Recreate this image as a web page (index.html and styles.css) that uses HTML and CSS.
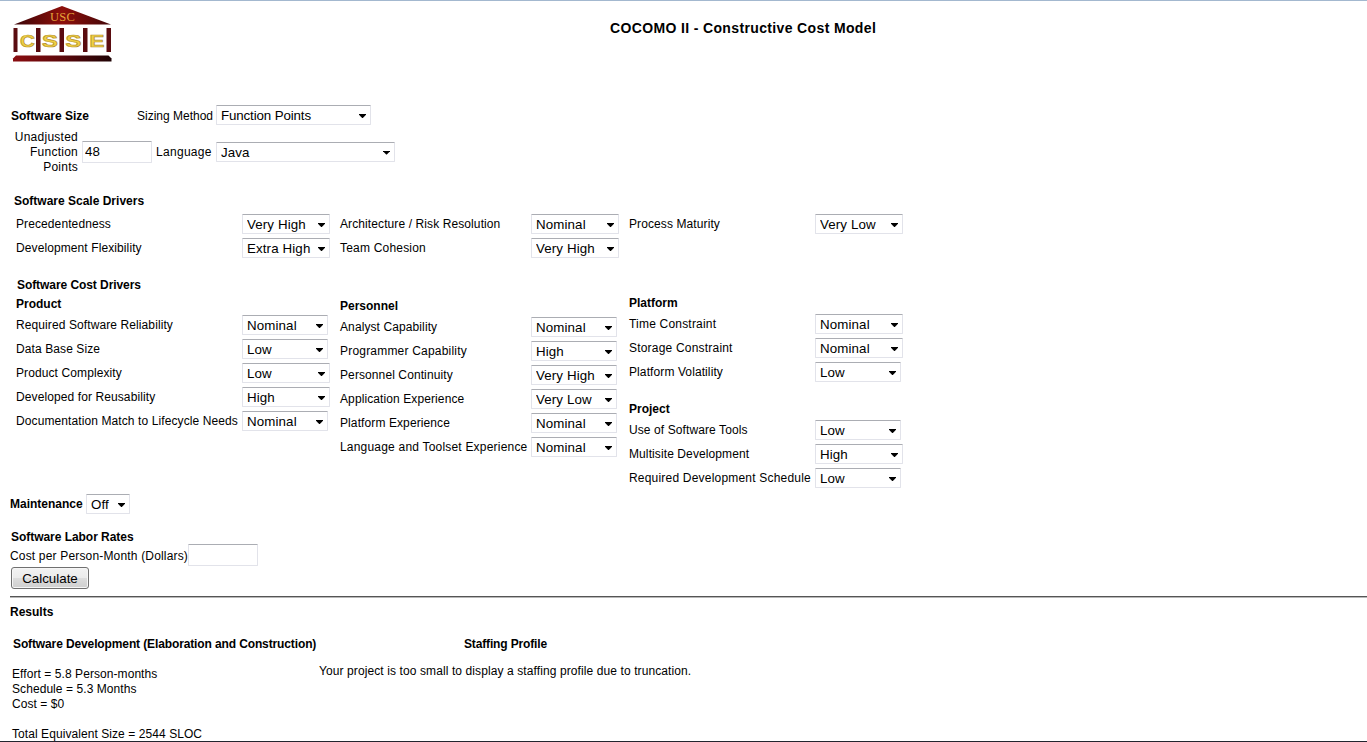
FILE: index.html
```html
<!DOCTYPE html>
<html lang="en">
<head>
<meta charset="utf-8">
<title>COCOMO II - Constructive Cost Model</title>
<link rel="stylesheet" href="styles.css">
</head>
<body>
<div class="page">
  <header class="header">
    <svg class="logo" width="102" height="60" viewBox="0 0 102 60" role="img" aria-label="USC CSSE">
      <defs>
        <linearGradient id="roof" x1="0" x2="1"><stop offset="0" stop-color="#3a0507"/><stop offset=".5" stop-color="#8d0f0b"/><stop offset="1" stop-color="#420608"/></linearGradient>
        <linearGradient id="base" x1="0" x2="1"><stop offset="0" stop-color="#8a0d10"/><stop offset=".5" stop-color="#5c080b"/><stop offset="1" stop-color="#1e0305"/></linearGradient>
      </defs>
      <path d="M50 1 L99 19.500 H2 Z" fill="url(#roof)"/>
      <text x="50.500" y="16" class="logo-usc" text-anchor="middle" textLength="25">USC</text>
      <g fill="#5a0c10"><path d="M1.500 23h4v24h-4zM24 23h4.500v24H24zM47.500 23H52v24h-4.500zM71 23h4.500v24H71zM94.500 23H99v24h-4.500z"/></g>
      <g class="logo-letters" text-anchor="middle">
        <text x="15.500" y="41.500" textLength="15" lengthAdjust="spacingAndGlyphs">C</text>
        <text x="38" y="41.500" textLength="16" lengthAdjust="spacingAndGlyphs">S</text>
        <text x="61.500" y="41.500" textLength="16" lengthAdjust="spacingAndGlyphs">S</text>
        <text x="85" y="41.500" textLength="15" lengthAdjust="spacingAndGlyphs">E</text>
      </g>
      <path d="M4 50.500H96.500L99.500 53.500V56.500H1V53.500Z" fill="url(#base)"/>
    </svg>
    <h1 class="title">COCOMO II - Constructive Cost Model</h1>
  </header>

  <section class="size">
    <div class="size-row">
      <b class="size-heading">Software Size</b>
      <span class="method-label">Sizing Method</span>
      <span class="select method"><select><option>Function Points</option></select></span>
    </div>
    <div class="size-row points-row">
      <span class="points-label">Unadjusted Function Points</span>
      <input class="field" type="text" value="48">
      <span class="language-label">Language</span>
      <span class="select language"><select><option>Java</option></select></span>
    </div>
  </section>

  <section class="scale">
    <h2 class="heading scale-heading">Software Scale Drivers</h2>
    <div class="columns">
      <div class="column first">
        <div class="row"><span>Precedentedness</span><span class="select"><select><option>Very High</option></select></span></div>
        <div class="row"><span>Development Flexibility</span><span class="select"><select><option>Extra High</option></select></span></div>
      </div>
      <div class="column second">
        <div class="row"><span>Architecture / Risk Resolution</span><span class="select"><select><option>Nominal</option></select></span></div>
        <div class="row"><span class="wide">Team Cohesion</span><span class="select"><select><option>Very High</option></select></span></div>
      </div>
      <div class="column third">
        <div class="row"><span>Process Maturity</span><span class="select"><select><option>Very Low</option></select></span></div>
      </div>
    </div>
  </section>

  <section class="cost">
    <h2 class="heading cost-heading">Software Cost Drivers</h2>
    <div class="columns">
      <div class="column first product">
        <h3 class="heading">Product</h3>
        <div class="row"><span>Required Software Reliability</span><span class="select narrow"><select><option>Nominal</option></select></span></div>
        <div class="row"><span>Data Base Size</span><span class="select narrow"><select><option>Low</option></select></span></div>
        <div class="row"><span>Product Complexity</span><span class="select"><select><option>Low</option></select></span></div>
        <div class="row"><span>Developed for Reusability</span><span class="select"><select><option>High</option></select></span></div>
        <div class="row"><span>Documentation Match to Lifecycle Needs</span><span class="select narrow"><select><option>Nominal</option></select></span></div>
      </div>
      <div class="column second personnel">
        <h3 class="heading">Personnel</h3>
        <div class="row"><span>Analyst Capability</span><span class="select narrow"><select><option>Nominal</option></select></span></div>
        <div class="row"><span class="wide">Programmer Capability</span><span class="select narrow"><select><option>High</option></select></span></div>
        <div class="row"><span>Personnel Continuity</span><span class="select narrow"><select><option>Very High</option></select></span></div>
        <div class="row"><span>Application Experience</span><span class="select narrow"><select><option>Very Low</option></select></span></div>
        <div class="row"><span>Platform Experience</span><span class="select narrow"><select><option>Nominal</option></select></span></div>
        <div class="row"><span class="wide">Language and Toolset Experience</span><span class="select narrow"><select><option>Nominal</option></select></span></div>
      </div>
      <div class="column third platform">
        <h3 class="heading">Platform</h3>
        <div class="row"><span class="wide">Time Constraint</span><span class="select"><select><option>Nominal</option></select></span></div>
        <div class="row"><span class="wide">Storage Constraint</span><span class="select"><select><option>Nominal</option></select></span></div>
        <div class="row"><span>Platform Volatility</span><span class="select narrow"><select><option>Low</option></select></span></div>
        <h3 class="heading project">Project</h3>
        <div class="row"><span>Use of Software Tools</span><span class="select narrow"><select><option>Low</option></select></span></div>
        <div class="row"><span>Multisite Development</span><span class="select"><select><option>High</option></select></span></div>
        <div class="row"><span class="wide">Required Development Schedule</span><span class="select narrow"><select><option>Low</option></select></span></div>
      </div>
    </div>
  </section>

  <section class="maintenance">
    <b>Maintenance</b>
    <span class="select toggle"><select><option>Off</option></select></span>
  </section>

  <section class="labor">
    <h2 class="heading labor-heading">Software Labor Rates</h2>
    <div class="labor-row"><span>Cost per Person-Month (Dollars)</span><input class="field" type="text"></div>
    <button class="calculate" type="button">Calculate</button>
  </section>

  <section class="results">
    <h2 class="heading">Results</h2>
    <div class="result-columns">
      <div class="development">
        <h3 class="heading">Software Development (Elaboration and Construction)</h3>
        <p class="effort">Effort = 5.8 Person-months<br>Schedule = 5.3 Months<br>Cost = $0<br><br>Total Equivalent Size = 2544 SLOC</p>
      </div>
      <div class="staffing">
        <h3 class="heading">Staffing Profile</h3>
        <p>Your project is too small to display a staffing profile due to truncation.</p>
      </div>
    </div>
  </section>
</div>
</body>
</html>
```
FILE: styles.css
```css
* { box-sizing: border-box; }
body { margin: 0; background: #fff; }
.page {
  height: 742px;
  overflow: hidden;
  border-top: 1px solid #a3b8cf;
  border-bottom: 1px solid #22242e;
  font: 12px/15px "Liberation Sans", Arial, sans-serif;
  letter-spacing: 0.1px;
  color: #000;
}
h1, h2, h3, p { margin: 0; }
.heading { font-size: 12px; line-height: 15px; font-weight: bold; letter-spacing: 0; }

.header { display: flex; height: 104px; padding: 4px 0 0 12px; }
.logo { flex: none; }
.logo-usc { font: 12.5px "Liberation Serif", serif; fill: #e5a33a; }
.logo-letters { font: bold 17px "Liberation Sans", sans-serif; fill: #eed044; stroke: #b8922a; stroke-width: .7px; }
.title {
  padding: 14px 0 0 496px;
  font-size: 14px;
  line-height: 18px;
  letter-spacing: 0.36px;
  white-space: nowrap;
}

.select { position: relative; display: block; flex: none; width: 88px; height: 20px; }
.select select {
  appearance: none;
  display: block;
  width: 100%;
  height: 20px;
  margin: 0;
  padding: 1px 0 0 4px;
  border: 1px solid #e2e3ea;
  border-top-color: #abadb3;
  border-radius: 1px;
  background: #fff;
  color: #000;
  font: 13.333px/17px "Liberation Sans", Arial, sans-serif;
  letter-spacing: 0.12px;
}
.select::after {
  content: "";
  position: absolute;
  right: 5px;
  top: 9px;
  width: 7px;
  height: 4px;
  background: #000;
  clip-path: polygon(0 0, 100% 0, 100% 20%, 55% 100%, 45% 100%, 0 20%);
}
.narrow { width: 86px; }
.field {
  width: 70px;
  height: 22px;
  margin: 0;
  padding: 1px 2px;
  border: 1px solid #e2e3ea;
  border-top-color: #abadb3;
  border-radius: 1px;
  font: 13.333px "Liberation Sans", Arial, sans-serif;
}

.size-row { display: flex; align-items: center; height: 20px; padding-left: 11px; }
.size-heading, .method-label, .points-label, .language-label { padding-top: 2px; }
.size-heading { width: 126px; letter-spacing: 0; }
.method-label { width: 79px; letter-spacing: 0; }
.method { width: 155px; }
.method select { letter-spacing: -0.13px; }
.points-row { height: 45px; margin-top: 4px; }
.points-label { width: 67px; margin-right: 4px; text-align: right; letter-spacing: 0.25px; }
.language-label { width: 60px; margin-left: 4px; letter-spacing: 0.3px; }
.language { width: 179px; }

.scale { margin-top: 20px; height: 84px; }
.scale-heading { padding-left: 14px; margin-bottom: 3px; }
.columns { display: flex; padding-left: 16px; }
.column { display: flex; flex-direction: column; }
.first { width: 324px; --label: 226px; }
.second { width: 289px; --label: 191px; }
.third { width: 274px; --label: 186px; }
.row { display: grid; grid-template-columns: var(--label) auto; justify-content: start; align-items: center; height: 24px; white-space: nowrap; }
.wide { letter-spacing: 0.2px; }

.cost { height: 216px; }
.cost-heading { padding-left: 17px; letter-spacing: -0.07px; }
.product { padding-top: 4px; }
.personnel { padding-top: 6px; }
.platform { padding-top: 3px; }
.column .heading { margin-bottom: 1px; }
.platform .project { margin-top: 18px; }

.maintenance { display: flex; align-items: center; height: 20px; padding-left: 10px; }
.maintenance b { width: 76px; padding-top: 1px; letter-spacing: 0; }
.toggle { width: 44px; }

.labor { margin-top: 16px; height: 66px; padding-left: 10px; }
.labor-heading { padding-left: 1px; letter-spacing: -0.04px; }
.labor-row { display: flex; align-items: center; height: 22px; margin-top: -1px; }
.labor-row span { width: 178px; padding-top: 2px; white-space: nowrap; letter-spacing: 0.17px; }
.calculate {
  display: block;
  width: 78px;
  height: 22px;
  margin: 1px 0 0 1px;
  padding: 0;
  border: 1px solid #707070;
  border-radius: 3px;
  background: linear-gradient(#f2f2f2 0, #ebebeb 49%, #dddddd 50%, #cfcfcf 100%);
  box-shadow: inset 0 0 0 1px #f6f6f6;
  color: #000;
  font: 13.333px "Liberation Sans", Arial, sans-serif;
}

.results { margin-left: 10px; padding-top: 8px; border-top: 1px solid #555; box-shadow: inset 0 1px #b8b8b8; }
.result-columns { display: flex; margin-top: 17px; white-space: nowrap; }
.development { width: 309px; padding-left: 2px; }
.development .heading { padding-left: 1px; letter-spacing: -0.12px; }
.effort { margin-top: 15px; letter-spacing: 0.07px; }
.staffing { width: 373px; }
.staffing .heading { text-align: center; letter-spacing: -0.14px; }
.staffing p { margin-top: 12px; }
```
